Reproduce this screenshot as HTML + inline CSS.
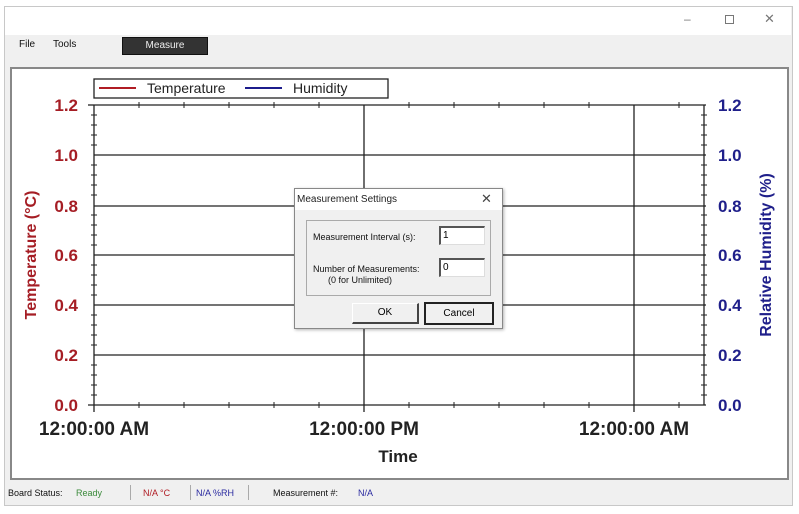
<!DOCTYPE html>
<html><head><meta charset="utf-8"><style>
body{margin:0;width:799px;height:514px;background:#fff;position:relative;overflow:hidden;font-family:"Liberation Sans",sans-serif}
.a{position:absolute}
</style></head><body>
<div class="a" style="left:4px;top:6px;width:787px;height:498px;border:1px solid #c8c8c8;background:#f0f0f0"></div>
<div class="a" style="left:5px;top:7px;width:786px;height:28px;background:#fff"></div>
<div class="a" style="left:684px;top:12px;font-size:12px;color:#777">–</div>
<div class="a" style="left:725px;top:15px;width:7px;height:7px;border:1px solid #777"></div>
<div class="a" style="left:764px;top:11px;font-size:13px;color:#777">✕</div>
<div class="a" style="left:19px;top:39px;font-size:10px;color:#111">File</div>
<div class="a" style="left:53px;top:39px;font-size:10px;color:#111">Tools</div>
<div class="a" style="left:122px;top:37px;width:84px;height:16px;background:#333;border:1px solid #111;color:#eee;font-size:10px;text-align:center;line-height:16px">Measure</div>
<div class="a" style="left:10px;top:67px;width:775px;height:409px;border:2px solid #888;background:#fff"></div>
<svg class="a" style="left:0;top:0" width="799" height="514">
<g stroke="#222" stroke-width="1.3" fill="none">
<path d="M94 105H706M94 155H706M94 206H706M94 255H706M94 305H706M94 355H706M88 405H706"/>
<path d="M94 105V412M364 105V412M634 105V412M704 105V405"/>
<path d="M88 105H94"/>
</g>
<g stroke="#222" stroke-width="1">
<path d="M91 115H97M91 125H97M91 135H97M91 145H97M91 165H97M91 175H97M91 185H97M91 195H97M91 215H97M91 225H97M91 235H97M91 245H97M91 265H97M91 275H97M91 285H97M91 295H97M91 315H97M91 325H97M91 335H97M91 345H97M91 365H97M91 375H97M91 385H97M91 395H97"/>
<path d="M701 115H707M701 125H707M701 135H707M701 145H707M701 165H707M701 175H707M701 185H707M701 195H707M701 215H707M701 225H707M701 235H707M701 245H707M701 265H707M701 275H707M701 285H707M701 295H707M701 315H707M701 325H707M701 335H707M701 345H707M701 365H707M701 375H707M701 385H707M701 395H707"/>
<path d="M139 102V108M184 102V108M229 102V108M274 102V108M319 102V108M409 102V108M454 102V108M499 102V108M544 102V108M589 102V108M679 102V108"/>
<path d="M139 402V408M184 402V408M229 402V408M274 402V408M319 402V408M409 402V408M454 402V408M499 402V408M544 402V408M589 402V408M679 402V408"/>
</g>
<rect x="94" y="79" width="294" height="19" fill="#fff" stroke="#222" stroke-width="1.3"/>
<path d="M99 88H136" stroke="#b01c24" stroke-width="2"/>
<path d="M245 88H282" stroke="#1c1c8c" stroke-width="2"/>
<text x="147" y="93" font-size="14" fill="#222">Temperature</text>
<text x="293" y="93" font-size="14" fill="#222">Humidity</text>
<g font-size="17" font-weight="bold" fill="#a51d24" text-anchor="end">
<text x="78" y="111">1.2</text><text x="78" y="161">1.0</text><text x="78" y="212">0.8</text><text x="78" y="261">0.6</text><text x="78" y="311">0.4</text><text x="78" y="361">0.2</text><text x="78" y="411">0.0</text>
</g>
<g font-size="17" font-weight="bold" fill="#1f1f8a">
<text x="718" y="111">1.2</text><text x="718" y="161">1.0</text><text x="718" y="212">0.8</text><text x="718" y="261">0.6</text><text x="718" y="311">0.4</text><text x="718" y="361">0.2</text><text x="718" y="411">0.0</text>
</g>
<text transform="translate(36 255) rotate(-90)" text-anchor="middle" font-size="16" font-weight="bold" fill="#a51d24">Temperature (°C)</text>
<text transform="translate(771 255) rotate(-90)" text-anchor="middle" font-size="16" font-weight="bold" fill="#1f1f8a">Relative Humidity (%)</text>
<g font-size="19" font-weight="bold" fill="#222" text-anchor="middle">
<text x="94" y="435">12:00:00 AM</text><text x="364" y="435">12:00:00 PM</text><text x="634" y="435">12:00:00 AM</text>
</g>
<text x="398" y="462" font-size="17" font-weight="bold" fill="#222" text-anchor="middle">Time</text>
</svg>
<div class="a" style="left:294px;top:188px;width:207px;height:139px;background:#f0f0f0;border:1px solid #888;box-shadow:1px 1px 3px rgba(0,0,0,.3)"></div>
<div class="a" style="left:295px;top:189px;width:207px;height:21px;background:#fff"></div>
<div class="a" style="left:297px;top:194px;font-size:10px;color:#222">Measurement Settings</div>
<div class="a" style="left:481px;top:191px;font-size:13px;color:#444">✕</div>
<div class="a" style="left:306px;top:220px;width:183px;height:74px;border:1px solid #aaa"></div>
<div class="a" style="left:313px;top:232px;font-size:9px;color:#111">Measurement Interval (s):</div>
<div class="a" style="left:313px;top:264px;font-size:9px;color:#111;line-height:11px">Number of Measurements:<br>&nbsp;&nbsp;&nbsp;&nbsp;&nbsp;&nbsp;(0 for Unlimited)</div>
<div class="a" style="left:439px;top:226px;width:41px;height:16px;background:#fff;border-top:2px solid #555;border-left:2px solid #555;border-right:1px solid #ddd;border-bottom:1px solid #ddd;font-size:10px;line-height:16px;padding-left:2px">1</div>
<div class="a" style="left:439px;top:258px;width:41px;height:16px;background:#fff;border-top:2px solid #555;border-left:2px solid #555;border-right:1px solid #ddd;border-bottom:1px solid #ddd;font-size:10px;line-height:16px;padding-left:2px">0</div>
<div class="a" style="left:352px;top:303px;width:64px;height:18px;background:#f0f0f0;border:1px solid #fff;border-right:2px solid #444;border-bottom:2px solid #444;font-size:10px;text-align:center;line-height:18px">OK</div>
<div class="a" style="left:424px;top:302px;width:66px;height:19px;border:2px solid #222;font-size:10px;text-align:center;line-height:19px">Cancel</div>
<div class="a" style="left:8px;top:488px;font-size:9px;color:#111">Board Status:</div>
<div class="a" style="left:76px;top:488px;font-size:9px;color:#3a8a3a">Ready</div>
<div class="a" style="left:130px;top:485px;width:1px;height:15px;background:#aaa"></div>
<div class="a" style="left:143px;top:488px;font-size:9px;color:#b01c24">N/A °C</div>
<div class="a" style="left:190px;top:485px;width:1px;height:15px;background:#aaa"></div>
<div class="a" style="left:196px;top:488px;font-size:9px;color:#2a2aa0">N/A %RH</div>
<div class="a" style="left:248px;top:485px;width:1px;height:15px;background:#aaa"></div>
<div class="a" style="left:273px;top:488px;font-size:9px;color:#111">Measurement #:</div>
<div class="a" style="left:358px;top:488px;font-size:9px;color:#2a2aa0">N/A</div>
</body></html>
